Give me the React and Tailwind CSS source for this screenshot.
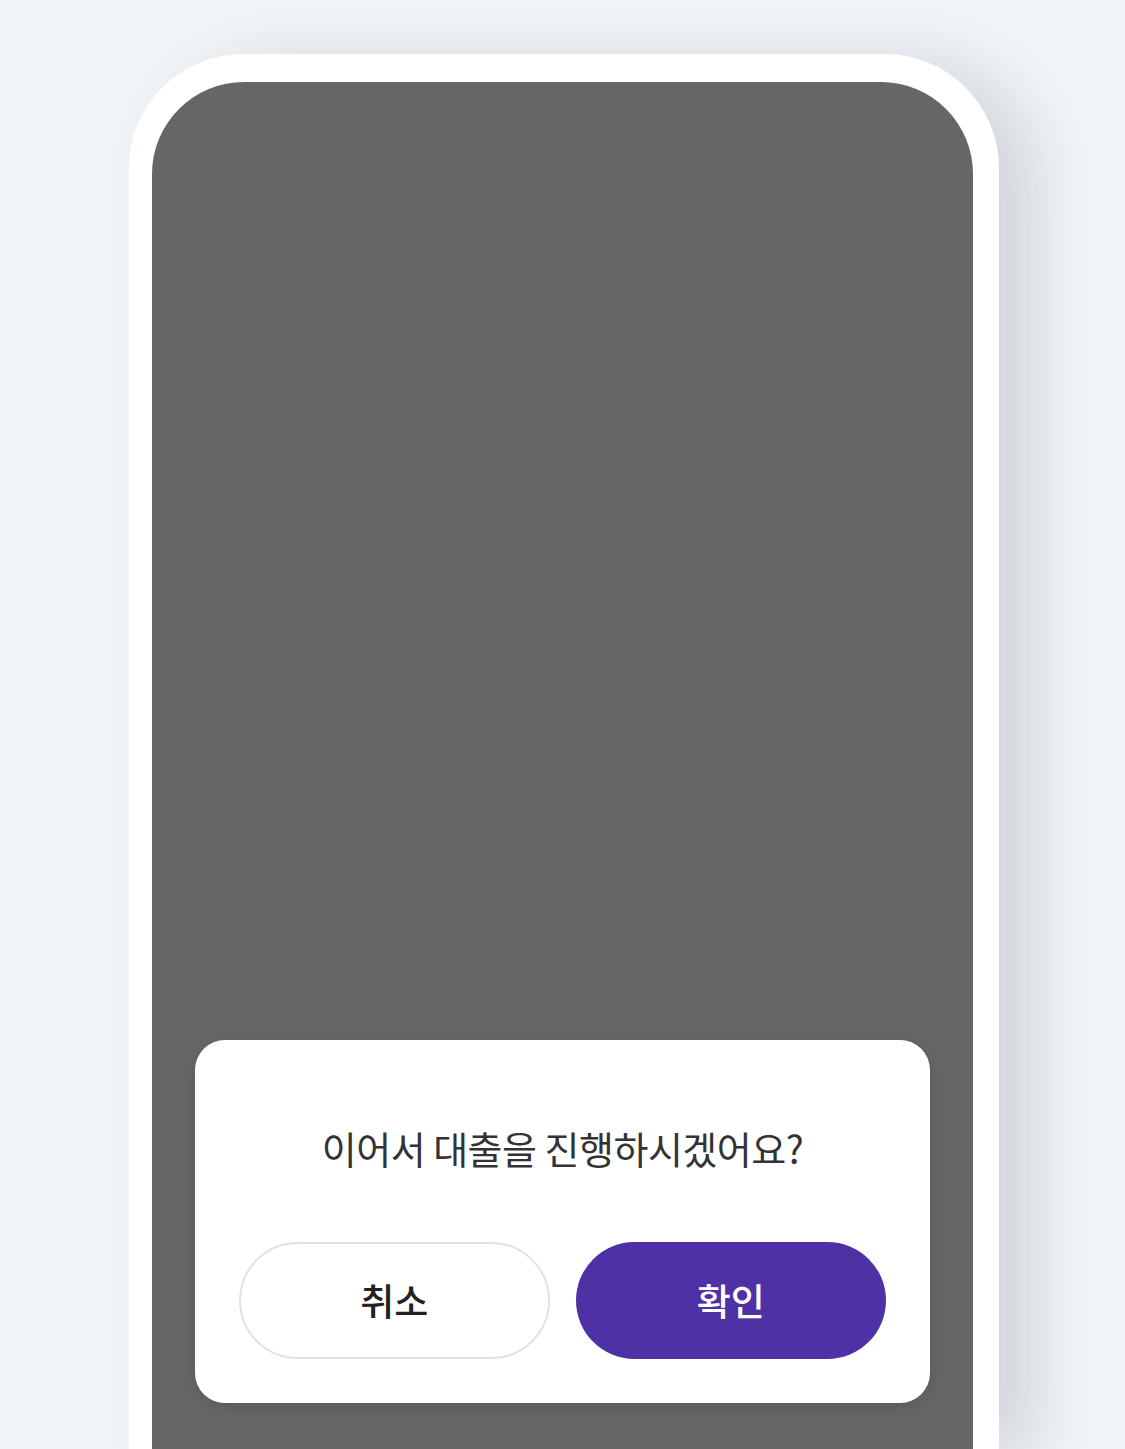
import React from "react";

const font = { fontFamily: '"Noto Sans CJK KR", "Noto Sans", sans-serif' };

const ConfirmDialog = ({ message, onCancel, onConfirm }) => {
  return (
    <div className="w-full bg-white rounded-[30px] px-[44px] pt-[86px] pb-[44px] flex flex-col items-center shadow-[0_4px_16px_rgba(0,0,0,0.12)]">
      <p className="text-[38px] leading-[44px] text-[#333333] tracking-[-0.5px]">
        {message}
      </p>
      <div className="w-full grid grid-cols-2 gap-[26px] mt-[72px]">
        <button
          onClick={onCancel}
          className="h-[117px] rounded-full border-2 border-[#e2e2e2] bg-white text-[37px] font-medium text-[#222222]"
        >
          취소
        </button>
        <button
          onClick={onConfirm}
          className="h-[117px] rounded-full bg-[#4e32a5] text-[37px] font-medium text-white"
        >
          확인
        </button>
      </div>
    </div>
  );
};

export default function App() {
  return (
    <div
      className="h-[1449px] overflow-hidden bg-[#f2f5f8] pt-[54px] pl-[129px]"
      style={font}
    >
      <div className="w-[870px] h-[1395px] bg-white rounded-t-[114px] pt-[28px] pl-[23px] pr-[26px] shadow-[36px_10px_70px_rgba(30,40,60,0.16)]">
        <div className="h-full bg-[#666666] rounded-t-[92px] flex flex-col justify-end px-[43px] pb-[46px]">
          <ConfirmDialog message="이어서 대출을 진행하시겠어요?" />
        </div>
      </div>
    </div>
  );
}
